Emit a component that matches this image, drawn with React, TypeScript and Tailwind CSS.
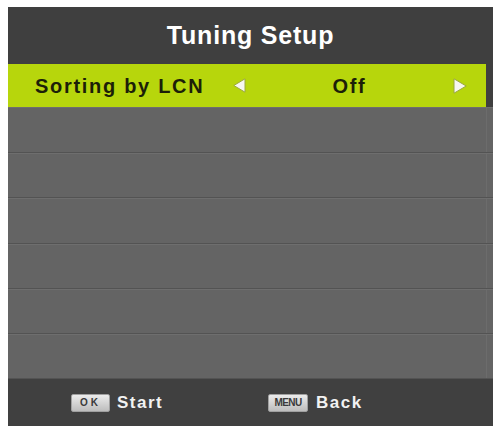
import React from 'react';

// Tuning Setup menu as drawn by the TV's on-screen display
const emptyRows = [46, 45, 46, 45, 45, 45];

const ArrowLeft = () => (
    <svg width="13" height="15" viewBox="0 0 13 15">
        <polygon points="12,0.8 12,14.2 0.8,7.5" fill="#f7f7f0" stroke="#9aa83e" strokeWidth="1" />
    </svg>
);

const ArrowRight = () => (
    <svg width="14" height="16" viewBox="0 0 14 16">
        <polygon points="1,0.8 1,15.2 13.2,8" fill="#f7f7f0" stroke="#9aa83e" strokeWidth="1" />
    </svg>
);

const Key = ({ label, wide }: { label: string; wide?: boolean }) => (
    <div
        className={`flex h-[18px] items-center justify-center rounded-[2px] border border-[#a0a0a0] bg-gradient-to-b from-[#ececec] to-[#bdbdbd] font-bold leading-none text-[#3a3a3a] ${wide ? 'w-[40px] text-[10px] tracking-[-0.6px]' : 'w-[39px] text-[10px] tracking-[3px]'}`}
    >
        {label}
    </div>
);

export default function App() {
    return (
        <div className="h-[428px] w-[495px] bg-white pl-[8px] pt-[7px] font-['Liberation_Sans',Arial,sans-serif]">
            <div className="flex h-[419px] w-[485px] flex-col bg-[#646464]">
                {/* title bar */}
                <div className="flex h-[57px] items-center justify-center bg-[#3f3f3f] text-[25px] font-bold tracking-[0.8px] text-white">
                    Tuning Setup
                </div>

                {/* selected item */}
                <div className="flex h-[43px] bg-[#3f3f3f]">
                    <div className="flex w-[478px] items-center bg-[#b7d60c] pl-[27px] pr-[19px] text-[20px] font-bold tracking-[1.7px] text-[#1c1f08]">
                        <span className="w-[198px]">Sorting by LCN</span>
                        <ArrowLeft />
                        <span className="flex-1 text-center">Off</span>
                        <ArrowRight />
                    </div>
                </div>

                {/* empty slots */}
                {emptyRows.map((h, i) => (
                    <div
                        key={i}
                        style={{ height: h }}
                        className="border-b border-b-[#535353] border-t border-t-[#6e6e6e] bg-[#646464] first:border-t-0 last:border-b-0"
                    >
                        <div className="ml-[478px] h-full w-px bg-[#6c6c6c]" />
                    </div>
                ))}

                {/* key hints */}
                <div className="flex h-[47px] items-center bg-[#404040] pl-[63px] text-[17px] font-bold tracking-[1.5px] text-[#f2f2f2]">
                    <div className="flex w-[197px] items-center gap-[7px]">
                        <Key label="OK" />
                        <span>Start</span>
                    </div>
                    <div className="flex items-center gap-[8px]">
                        <Key label="MENU" wide />
                        <span>Back</span>
                    </div>
                </div>
            </div>
        </div>
    );
}
